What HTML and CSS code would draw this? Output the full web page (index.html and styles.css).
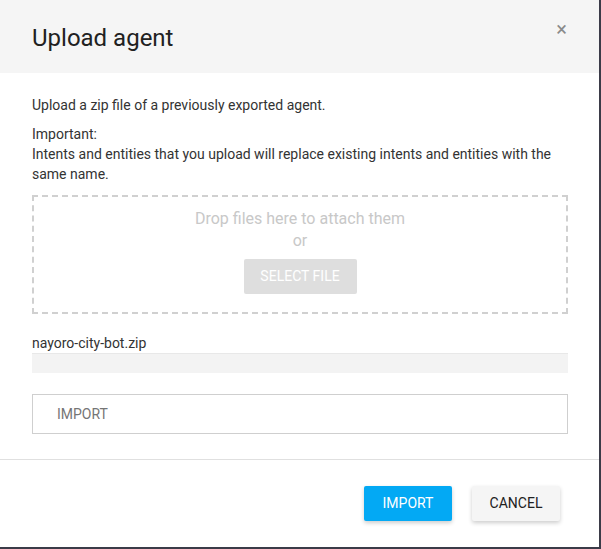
FILE: index.html
```html
<!DOCTYPE html>
<html>
<head>
<meta charset="utf-8">
<title>Upload agent</title>
<link rel="stylesheet" href="styles.css">
</head>
<body>
<div class="dialog">
    <div class="dialog-head">
        <h1>Upload agent</h1>
        <span class="close">&times;</span>
    </div>
    <div class="dialog-body">
        <p class="intro">Upload a zip file of a previously exported agent.</p>
        <p class="note">Important:<br>Intents and entities that you upload will replace existing intents and entities with the same name.</p>
        <div class="drop">
            <div class="drop-text">Drop files here to attach them</div>
            <div class="drop-or">or</div>
            <div class="select-btn">SELECT FILE</div>
        </div>
        <div class="file-name">nayoro-city-bot.zip</div>
        <div class="progress"></div>
        <div class="import-field">IMPORT</div>
    </div>
    <div class="dialog-foot">
        <div class="btn btn-primary">IMPORT</div>
        <div class="btn btn-cancel">CANCEL</div>
    </div>
</div>
</body>
</html>
```

FILE: styles.css
```css
* {
    margin: 0;
    padding: 0;
    box-sizing: border-box;
}

body {
    background-color: #3b3b48;
    font-family: Roboto, "Liberation Sans", sans-serif;
    width: 601px;
    height: 549px;
    overflow: hidden;
}

.dialog {
    width: 599px;
    height: 547px;
    background-color: #fff;
    display: flex;
    flex-direction: column;
}

.dialog-head {
    height: 73px;
    background-color: #f5f5f5;
    display: flex;
    justify-content: space-between;
    padding: 22px 32px 0 32px;
}

.dialog-head h1 {
    font-size: 24px;
    font-weight: 400;
    color: #212121;
    line-height: 32px;
}

.close {
    font-size: 20px;
    color: #8a8a8a;
    line-height: 16px;
    margin-top: -1px;
}

.dialog-body {
    padding: 22px 31px 0 32px;
    font-size: 14px;
    color: #333;
    line-height: 20px;
    border-bottom: 1px solid #e0e0e0;
    height: 387px;
}

.intro {
    margin-bottom: 9px;
}

.note {
    margin-bottom: 11px;
}

.drop {
    height: 119px;
    border: 2px dashed #d0d0d0;
    text-align: center;
    padding-top: 11px;
}

.drop-text {
    font-size: 16px;
    color: #c8c8c8;
    line-height: 22px;
}

.drop-or {
    font-size: 16px;
    color: #c8c8c8;
    line-height: 22px;
}

.select-btn {
    display: inline-block;
    width: 113px;
    height: 35px;
    line-height: 35px;
    margin-top: 7px;
    background-color: #dedede;
    color: #fff;
    border-radius: 2px;
}

.file-name {
    margin-top: 19px;
}

.progress {
    height: 20px;
    margin-top: 0;
    background-color: #f3f3f3;
    border-top: 1px solid #e8e8e8;
}

.import-field {
    margin-top: 21px;
    height: 40px;
    border: 1px solid #cfcfcf;
    padding-left: 24px;
    line-height: 38px;
    color: #757575;
}

.dialog-foot {
    display: flex;
    justify-content: flex-end;
    gap: 20px;
    padding: 26px 39px 0 0;
}

.btn {
    width: 88px;
    height: 35px;
    line-height: 35px;
    text-align: center;
    font-size: 14px;
    border-radius: 2px;
    box-shadow: 0 2px 4px rgba(0, 0, 0, .2);
}

.btn-primary {
    background-color: #03a9f4;
    color: #fff;
}

.btn-cancel {
    background-color: #f5f5f5;
    color: #212121;
}
```
